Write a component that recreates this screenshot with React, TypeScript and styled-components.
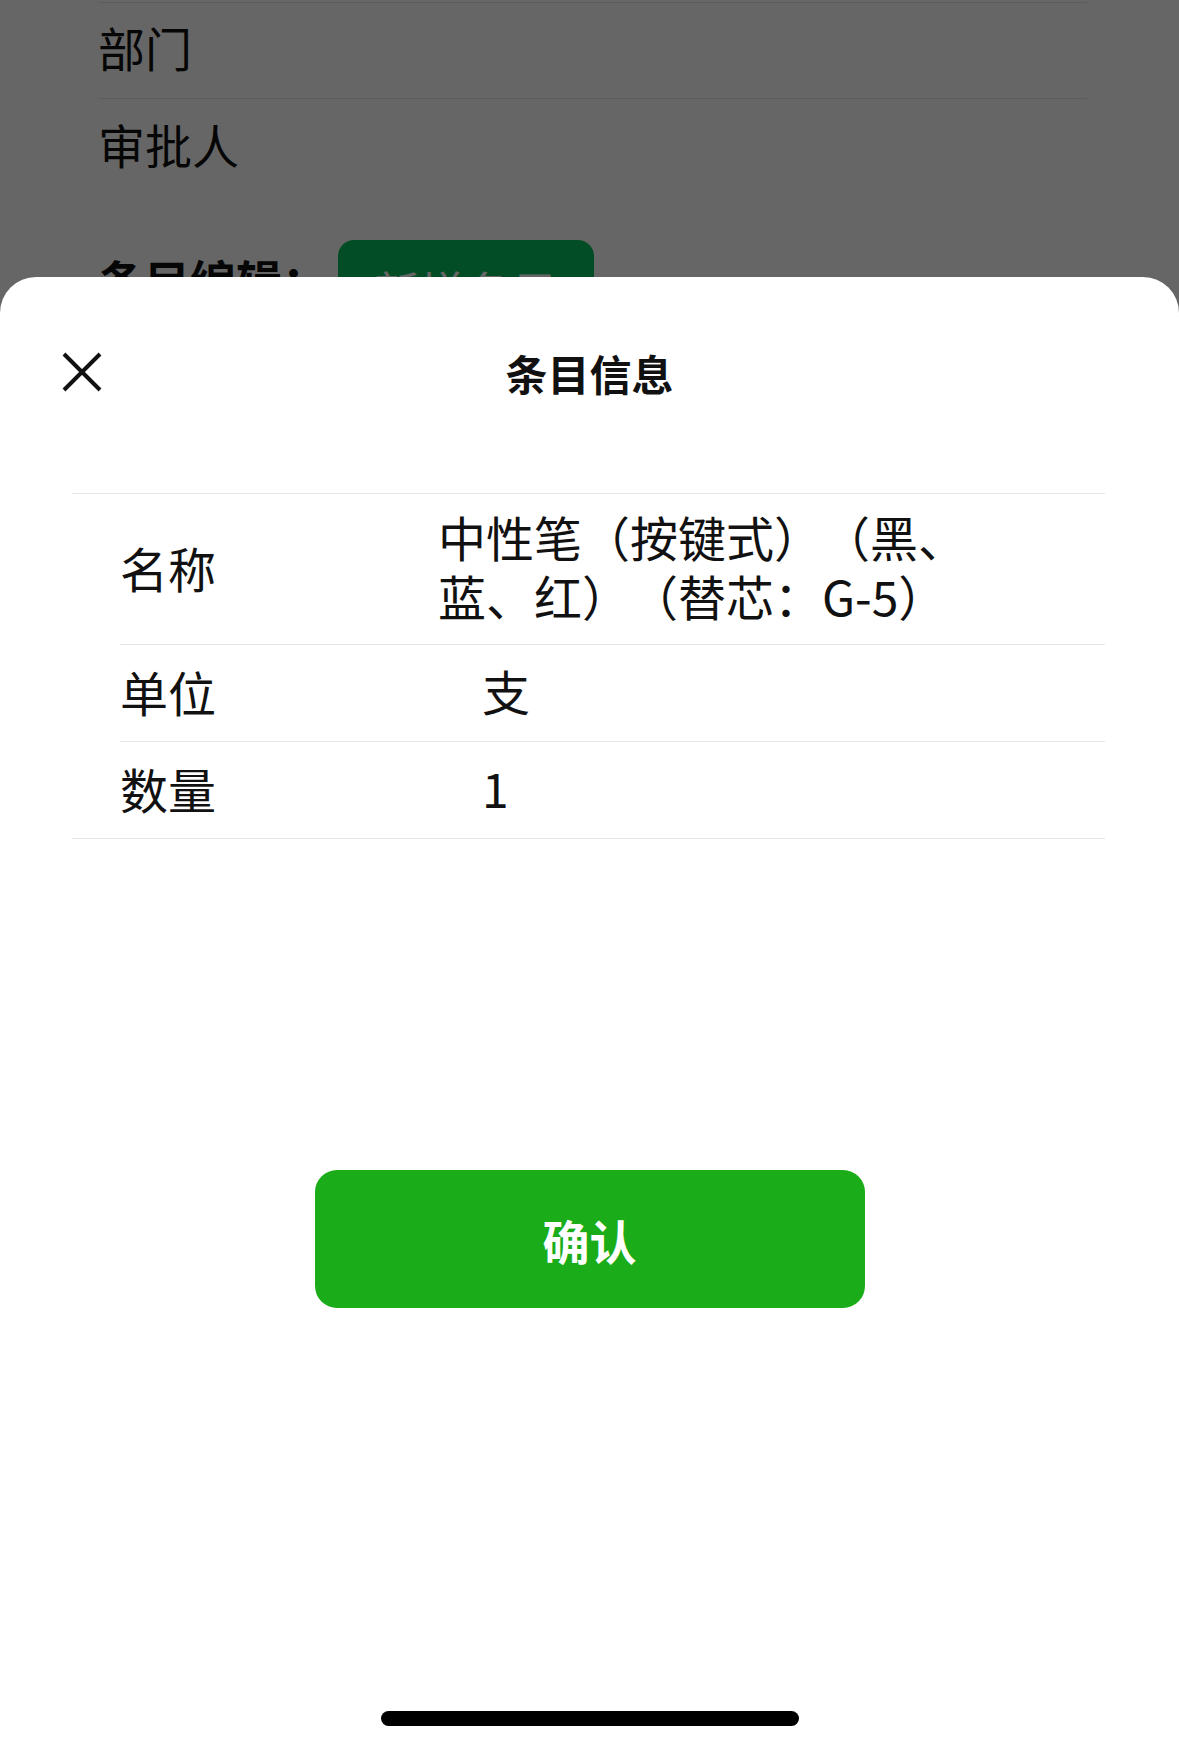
import React from 'react';
import styled, { createGlobalStyle } from 'styled-components';

const GlobalStyle = createGlobalStyle`
  html, body {
    margin: 0;
    padding: 0;
    background: #ffffff;
  }
  body {
    font-family: 'Noto Sans CJK SC', 'Noto Sans', sans-serif;
    color: #111111;
  }
`;

const Screen = styled.div`
  position: relative;
  width: 1179px;
  height: 1750px;
  overflow: hidden;
  background: #ffffff;
`;

/* page under the sheet */
const BackPage = styled.div`
  padding-top: 2px;
`;

const FormList = styled.div`
  margin: 0 92px 0 98px;
  border-top: 1px solid #e6e6e6;
`;

const FormRow = styled.div<{ $line?: boolean }>`
  height: 96px;
  box-sizing: border-box;
  padding-bottom: 8px;
  display: flex;
  align-items: center;
  font-size: 47px;
  color: #111;
  border-bottom: ${(p) => (p.$line ? '1px solid #e6e6e6' : 'none')};
`;

const EditBar = styled.div`
  display: flex;
  align-items: flex-start;
  gap: 10px;
  margin: 45px 0 0 98px;
`;

const EditLabel = styled.span`
  padding-top: 6px;
  font-size: 46px;
  font-weight: 700;
  color: #111;
`;

const AddButton = styled.button`
  height: 100px;
  padding: 0 36px;
  border: 0;
  border-radius: 16px;
  background: #07c160;
  color: #ffffff;
  font-family: inherit;
  font-size: 46px;
`;

const Mask = styled.div`
  position: absolute;
  inset: 0;
  background: rgba(0, 0, 0, 0.6);
`;

/* bottom sheet */
const Sheet = styled.div`
  position: absolute;
  left: 0;
  right: 0;
  top: 277px;
  bottom: 0;
  background: #ffffff;
  border-radius: 36px 36px 0 0;
  display: flex;
  flex-direction: column;
`;

const Header = styled.div`
  height: 190px;
  display: grid;
  grid-template-columns: 1fr auto 1fr;
  align-items: center;
  padding: 0 62px;
`;

const CloseButton = styled.button`
  width: 40px;
  height: 40px;
  padding: 0;
  border: 0;
  background: none;
  display: flex;
`;

const Title = styled.h2`
  margin: 0;
  font-size: 42px;
  font-weight: 700;
  color: #111;
`;

const Table = styled.div`
  margin: 26px 74px 0 72px;
  border-top: 1px solid #e5e5e5;
  border-bottom: 1px solid #e5e5e5;
`;

const Row = styled.div`
  padding-left: 48px;
`;

const RowBody = styled.div<{ $last?: boolean }>`
  display: flex;
  align-items: center;
  font-size: 48px;
  color: #111;
  border-bottom: ${(p) => (p.$last ? 'none' : '1px solid #e5e5e5')};
`;

const Label = styled.div<{ $tall?: boolean }>`
  width: 318px;
  flex: none;
  min-height: ${(p) => (p.$tall ? '150px' : '96px')};
  padding-bottom: 4px;
  box-sizing: border-box;
  display: flex;
  align-items: center;
`;

const Value = styled.div<{ $inset?: boolean }>`
  padding-left: ${(p) => (p.$inset ? '44px' : '0')};
  padding-bottom: 6px;
  max-width: 548px;
  line-height: 59px;
  text-spacing-trim: space-all;
`;

const Confirm = styled.button`
  align-self: center;
  margin-top: 331px;
  width: 550px;
  height: 138px;
  border: 0;
  border-radius: 22px;
  background: #1aad19;
  color: #ffffff;
  font-family: inherit;
  font-size: 47px;
  font-weight: 700;
`;

const HomeBar = styled.div`
  align-self: center;
  margin: auto 0 24px;
  width: 418px;
  height: 15px;
  border-radius: 8px;
  background: #000000;
`;

const CloseIcon = () => (
  <svg width="40" height="40" viewBox="0 0 40 40">
    <path d="M2 2 L38 38 M38 2 L2 38" stroke="#111" strokeWidth="4" fill="none" />
  </svg>
);

const rows = [
  { label: '单位', value: '支' },
  { label: '数量', value: '1' },
];

const App: React.FC = () => {
  return (
    <Screen>
      <GlobalStyle />
      <BackPage>
        <FormList>
          <FormRow $line>部门</FormRow>
          <FormRow>审批人</FormRow>
        </FormList>
        <EditBar>
          <EditLabel>条目编辑：</EditLabel>
          <AddButton>新增条目</AddButton>
        </EditBar>
      </BackPage>
      <Mask />
      <Sheet>
        <Header>
          <CloseButton>
            <CloseIcon />
          </CloseButton>
          <Title>条目信息</Title>
          <div />
        </Header>
        <Table>
          <Row>
            <RowBody>
              <Label $tall>名称</Label>
              <Value>中性笔（按键式）（黑、蓝、红）（替芯：G-5）</Value>
            </RowBody>
          </Row>
          {rows.map((r, i) => (
            <Row key={r.label}>
              <RowBody $last={i === rows.length - 1}>
                <Label>{r.label}</Label>
                <Value $inset>{r.value}</Value>
              </RowBody>
            </Row>
          ))}
        </Table>
        <Confirm>确认</Confirm>
        <HomeBar />
      </Sheet>
    </Screen>
  );
};

export default App;
